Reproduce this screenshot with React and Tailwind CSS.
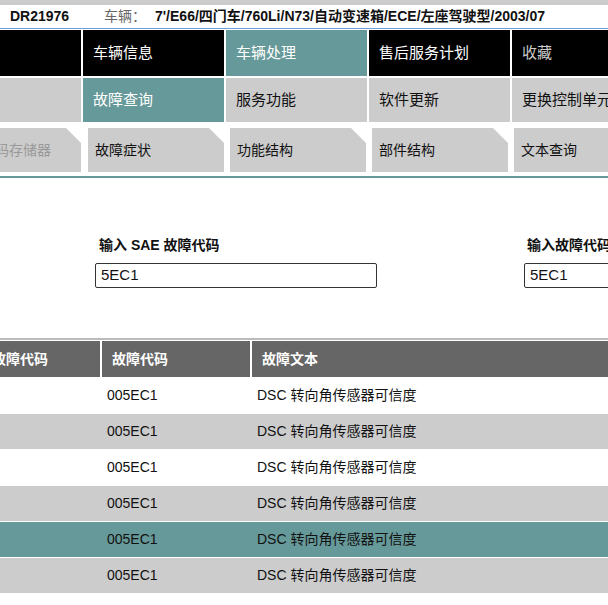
const navTop = [
  { label: "", cls: "bg-black" },
  { label: "车辆信息", cls: "bg-black text-white" },
  { label: "车辆处理", cls: "bg-[#669999] text-white" },
  { label: "售后服务计划", cls: "bg-black text-white" },
  { label: "收藏", cls: "bg-black text-[#cccccc]" },
];

const navSub = [
  { label: "", cls: "bg-[#cccccc]" },
  { label: "故障查询", cls: "bg-[#669999] text-white" },
  { label: "服务功能", cls: "bg-[#cccccc] text-[#111]" },
  { label: "软件更新", cls: "bg-[#cccccc] text-[#111]" },
  { label: "更换控制单元", cls: "bg-[#cccccc] text-[#111]" },
];

const tabs = ["故障症状", "功能结构", "部件结构", "文本查询"];

const rows = ["white", "gray", "white", "gray", "teal", "gray"];

const rowBg = {
  white: "bg-white",
  gray: "bg-[#cccccc]",
  teal: "bg-[#669999]",
};

const NavCell = ({ item, first }) => (
  <div
    className={`${first ? "w-[81px]" : "w-[141px]"} shrink-0 flex items-center pl-[10px] text-[15px] whitespace-nowrap overflow-hidden ${item.cls}`}
  >
    {item.label}
  </div>
);

export default function App() {
  return (
    <div className="w-[608px] h-[605px] overflow-hidden bg-white text-[#111] font-['Liberation_Sans','Noto_Sans_CJK_SC',sans-serif]">
      <div className="h-[5px] bg-[#cccccc]" />
      <div className="h-[23px] flex items-center text-[14px] whitespace-nowrap">
        <span className="pl-[10px] w-[104px] font-bold">DR21976</span>
        <span className="w-[51px] text-[#666]">车辆：</span>
        <span className="font-bold">7'/E66/四门车/760Li/N73/自动变速箱/ECE/左座驾驶型/2003/07</span>
      </div>
      <div className="h-px bg-[#6f9fd8]" />
      <div className="h-px bg-white" />

      {/* top nav */}
      <div className="h-[46px] flex gap-[2px] overflow-hidden">
        {navTop.map((item, i) => (
          <NavCell key={i} item={item} first={i === 0} />
        ))}
      </div>
      <div className="h-[2px]" />
      <div className="h-[44px] flex gap-[2px] overflow-hidden">
        {navSub.map((item, i) => (
          <NavCell key={i} item={item} first={i === 0} />
        ))}
      </div>

      {/* tabs */}
      <div className="h-[44px] mt-[6px] flex gap-[6px] overflow-hidden">
        <div className="w-[81px] shrink-0 bg-[#cccccc] flex items-center overflow-hidden whitespace-nowrap text-[14px] text-[#999] [clip-path:polygon(0_0,calc(100%_-_15px)_0,100%_15px,100%_100%,0_100%)]">
          <span className="ml-[-47px]">故障代码存储器</span>
        </div>
        {tabs.map((t, i) => (
          <div
            key={t}
            className={`${i === 0 ? "ml-px" : ""} w-[136px] shrink-0 bg-[#cccccc] flex items-center pl-[7px] text-[14px] whitespace-nowrap [clip-path:polygon(0_0,calc(100%_-_15px)_0,100%_15px,100%_100%,0_100%)]`}
          >
            {t}
          </div>
        ))}
      </div>
      <div className="h-[4px]" />
      <div className="h-[2px] bg-[#669999]" />

      {/* search inputs */}
      <div className="h-[160px] flex pt-[57px] overflow-hidden">
        <div className="ml-[95px] w-[282px] shrink-0">
          <div className="h-[20px] ml-[4px] flex items-center text-[14px] font-bold whitespace-nowrap">
            输入 SAE 故障代码
          </div>
          <div className="mt-[8px] h-[25px] border border-[#333] rounded-[2px] flex items-center pl-[5px] text-[15px] text-[#111]">
            5EC1
          </div>
        </div>
        <div className="ml-[147px] w-[282px] shrink-0">
          <div className="h-[20px] ml-[3px] flex items-center text-[14px] font-bold whitespace-nowrap">
            输入故障代码
          </div>
          <div className="mt-[8px] h-[25px] border border-[#333] rounded-[2px] flex items-center pl-[5px] text-[15px] text-[#111]">
            5EC1
          </div>
        </div>
      </div>

      <div className="h-[2px] bg-[#bbbbbb]" />
      <div className="h-px" />

      {/* table */}
      <div className="h-[36px] flex gap-[2px] text-[14px] font-bold text-white whitespace-nowrap">
        <div className="w-[100px] shrink-0 bg-[#666666] flex items-center overflow-hidden">
          <span className="ml-[-8px]">故障代码</span>
        </div>
        <div className="w-[148px] shrink-0 bg-[#666666] flex items-center pl-[10px]">故障代码</div>
        <div className="flex-1 bg-[#666666] flex items-center pl-[10px]">故障文本</div>
      </div>
      {rows.map((r, i) => (
        <div
          key={i}
          className={`mt-px h-[35px] flex items-center text-[14px] text-[#111] whitespace-nowrap ${rowBg[r]}`}
        >
          <div className="w-[102px] shrink-0" />
          <div className="w-[150px] shrink-0 pl-[5px]">005EC1</div>
          <div className="pl-[5px]">DSC 转向角传感器可信度</div>
        </div>
      ))}
    </div>
  );
}
